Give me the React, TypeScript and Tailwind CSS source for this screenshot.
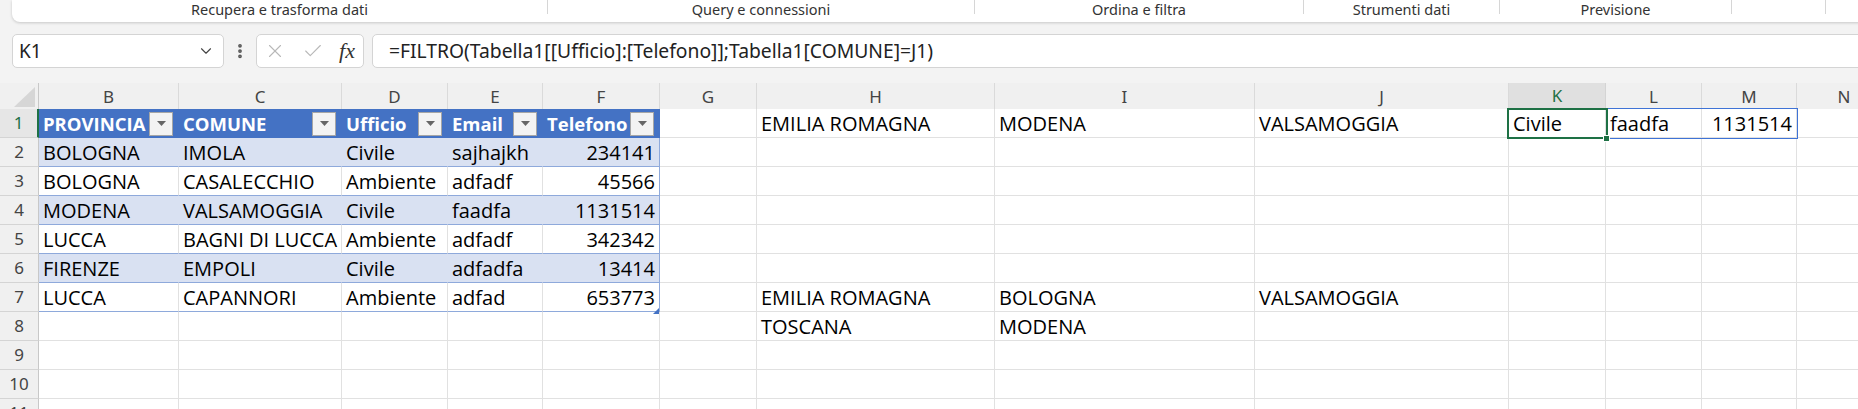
import { ChevronDown, X, Check, EllipsisVertical } from "lucide-react"

// Colonne visibili: B..N (la A è nascosta nello screenshot)
const columns = ["B", "C", "D", "E", "F", "G", "H", "I", "J", "K", "L", "M", "N"]

const rows: string[][] = [
  ["PROVINCIA", "COMUNE", "Ufficio", "Email", "Telefono", "", "EMILIA ROMAGNA", "MODENA", "VALSAMOGGIA", "Civile", "faadfa", "1131514", ""],
  ["BOLOGNA", "IMOLA", "Civile", "sajhajkh", "234141"],
  ["BOLOGNA", "CASALECCHIO", "Ambiente", "adfadf", "45566"],
  ["MODENA", "VALSAMOGGIA", "Civile", "faadfa", "1131514"],
  ["LUCCA", "BAGNI DI LUCCA", "Ambiente", "adfadf", "342342"],
  ["FIRENZE", "EMPOLI", "Civile", "adfadfa", "13414"],
  ["LUCCA", "CAPANNORI", "Ambiente", "adfad", "653773", "", "EMILIA ROMAGNA", "BOLOGNA", "VALSAMOGGIA"],
  ["", "", "", "", "", "", "TOSCANA", "MODENA"],
  [],
  [],
  [],
]

const ribbonGroups = [
  { label: "Recupera e trasforma dati", w: "w-[536px]" },
  { label: "Query e connessioni", w: "w-[427px]" },
  { label: "Ordina e filtra", w: "w-[329px]" },
  { label: "Strumenti dati", w: "w-[196px]" },
  { label: "Previsione", w: "w-[232px]" },
  { label: "", w: "w-[94px]" },
  { label: "", w: "w-[60px]" },
]

const gridCols =
  "grid grid-cols-[39px_140px_163px_106px_95px_117px_97px_238px_260px_254px_97px_96px_95px_95px]"

function cellStyle(r: number, c: number) {
  const inTable = r < 7 && c < 5
  if (inTable && r === 0) return "bg-[#4472c4] text-white font-bold text-[18.5px] border-r-[#4472c4] border-b-[#4472c4]"
  if (inTable && r % 2 === 1) {
    return c === 4
      ? "bg-[#d9e1f2] text-[20px] border-r-[#8ea9db] border-b-[#8ea9db]"
      : "bg-[#d9e1f2] text-[20px] border-r-[#d9e1f2] border-b-[#8ea9db]"
  }
  if (inTable) {
    return c === 4
      ? "bg-white text-[20px] border-r-[#8ea9db] border-b-[#8ea9db]"
      : "bg-white text-[20px] border-r-[#e1e1e1] border-b-[#8ea9db]"
  }
  return "bg-white text-[20px] border-r-[#e1e1e1] border-b-[#e1e1e1]"
}

function FilterButton() {
  return (
    <div className="ml-auto mr-[1px] flex h-[24px] w-[24px] shrink-0 items-center justify-center border border-[#a6a6a6] bg-[#f3f3f3]">
      <svg width="9" height="5" viewBox="0 0 9 5">
        <path d="M0 0h9L4.5 5z" fill="#666" />
      </svg>
    </div>
  )
}

export default function App() {
  return (
    <div className="h-[409px] w-[1858px] overflow-hidden bg-[#f3f3f3] font-['Noto_Sans',sans-serif] text-[#333]">
      {/* ribbon (solo le etichette dei gruppi) */}
      <div className="ml-[12px] flex h-[22px] w-[1900px] rounded-b-[8px] bg-white shadow-[0_1px_3px_rgba(0,0,0,0.18)]">
        {ribbonGroups.map((g, i) => (
          <div key={i} className={`${g.w} flex shrink-0`}>
            <div className="flex-1 text-center text-[14.5px] leading-[18px] text-[#333]">{g.label}</div>
            <div className="h-[14px] w-px bg-[#d6d6d6]" />
          </div>
        ))}
      </div>

      {/* barra della formula */}
      <div className="mt-[12px] flex h-[34px] items-stretch">
        <div className="ml-[12px] flex w-[212px] shrink-0 items-center justify-between rounded-[5px] border border-[#d4d4d4] bg-white pl-[6px] pr-[8px] text-[19px] text-[#222]">
          <span>K1</span>
          <ChevronDown size={18} strokeWidth={1.5} className="text-[#444]" />
        </div>
        <div className="flex w-[32px] shrink-0 items-center justify-center">
          <EllipsisVertical size={18} strokeWidth={3} className="text-[#555]" />
        </div>
        <div className="flex w-[108px] shrink-0 items-center justify-between rounded-[5px] border border-[#d4d4d4] bg-white pl-[7px] pr-[8px]">
          <X size={22} strokeWidth={1.2} className="text-[#b8b8b8]" />
          <Check size={22} strokeWidth={1.2} className="text-[#b8b8b8]" />
          <span className="font-['Liberation_Serif',serif] text-[22px] italic leading-none text-[#333]">fx</span>
        </div>
        <div className="ml-[8px] flex w-[1600px] shrink-0 items-center rounded-[5px] border border-[#d4d4d4] bg-white pl-[16px] text-[19.3px] text-[#222]">
          =FILTRO(Tabella1[[Ufficio]:[Telefono]];Tabella1[COMUNE]=J1)
        </div>
      </div>

      {/* foglio */}
      <div className="relative mt-[15px]">
        <div className={`${gridCols} h-[26px] bg-[#f0f0f0] text-[17px] text-[#444]`}>
          <div className="flex items-end justify-end border-r border-b border-[#c8c8c8] pr-[3px] pb-[3px]">
            <svg width="21" height="20" viewBox="0 0 21 20">
              <path d="M21 0V20H0z" fill="#d6d6d6" />
            </svg>
          </div>
          {columns.map((col) =>
            col === "K" ? (
              <div key={col} className="flex items-center justify-center border-r border-b-2 border-r-[#d4d4d4] border-b-[#1e7145] bg-[#e0e0e0] text-[#1e7145]">
                {col}
              </div>
            ) : (
              <div key={col} className="flex items-center justify-center border-r border-b border-r-[#dadada] border-b-[#c8c8c8]">
                {col}
              </div>
            )
          )}
        </div>

        {rows.map((row, r) => (
          <div key={r} className={`${gridCols} h-[29px]`}>
            {r === 0 ? (
              <div className="flex items-center justify-center border-r-2 border-b border-r-[#1e7145] border-b-[#d4d4d4] bg-[#e6e6e6] text-[17px] text-[#1e7145]">
                {r + 1}
              </div>
            ) : (
              <div className="flex items-center justify-center border-r border-b border-r-[#c8c8c8] border-b-[#d4d4d4] bg-[#f0f0f0] text-[17px] text-[#444]">
                {r + 1}
              </div>
            )}
            {columns.map((_, c) => {
              const v = row[c] ?? ""
              const num = /^\d+$/.test(v)
              return (
                <div
                  key={c}
                  className={`flex items-center overflow-hidden whitespace-nowrap border-r border-b px-[4px] pt-[1px] font-['Open_Sans',sans-serif] text-black ${
                    num ? "justify-end" : "justify-start"
                  } ${cellStyle(r, c)}`}
                >
                  <span>{v}</span>
                  {r === 0 && c < 5 && <FilterButton />}
                </div>
              )
            })}
          </div>
        ))}

        {/* intervallo di espansione K1:M1 */}
        <div className="absolute left-[1606px] top-[25px] h-[31px] w-[192px] border border-l-0 border-[#3f73d6]" />
        {/* cella attiva K1 */}
        <div className="absolute left-[1507px] top-[25px] h-[31px] w-[101px] border-2 border-[#1e7145]" />
        <div className="absolute left-[1603px] top-[52px] h-[7px] w-[7px] border border-white bg-[#1e7145]" />
        {/* maniglia della tabella */}
        <svg className="absolute left-[653px] top-[225px]" width="6" height="6" viewBox="0 0 6 6">
          <path d="M6 0V6H0z" fill="#4472c4" />
        </svg>
      </div>
    </div>
  )
}
